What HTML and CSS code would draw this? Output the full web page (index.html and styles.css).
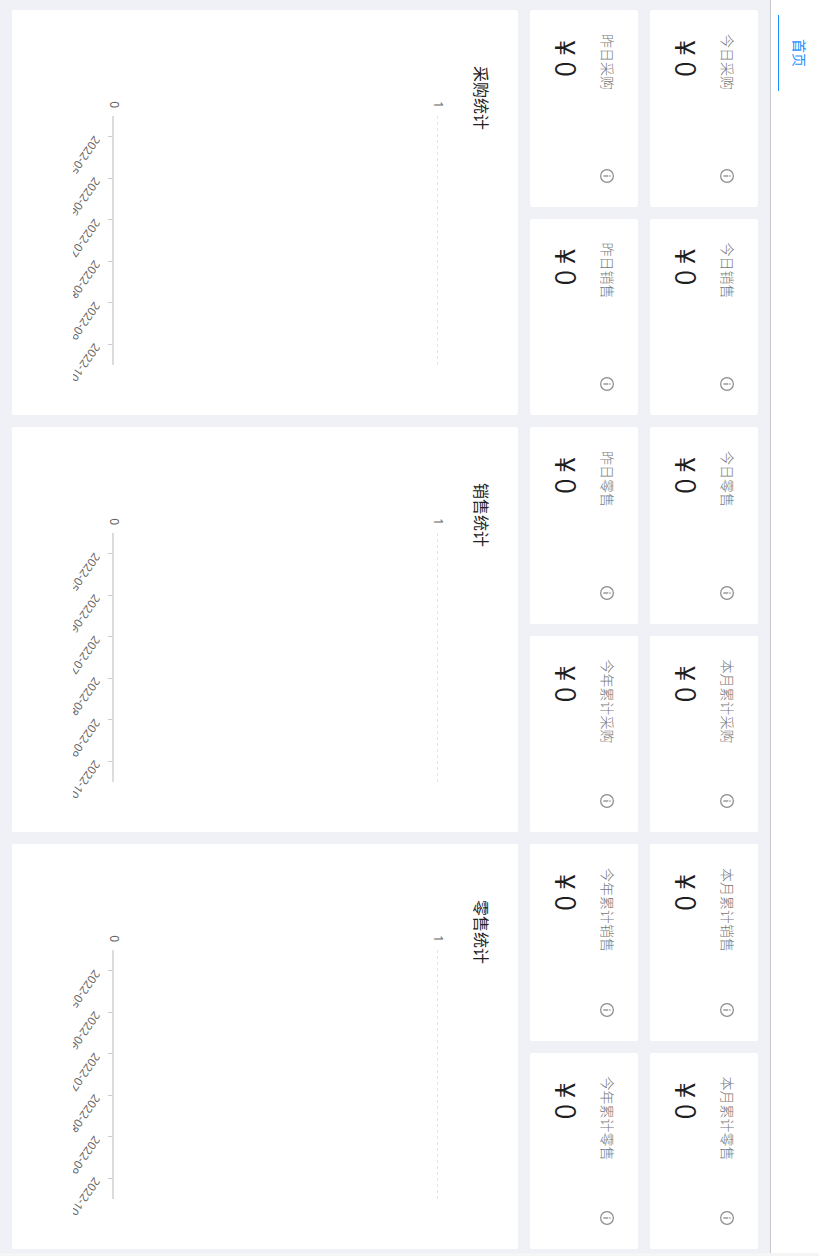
FILE: index.html
```html
<!DOCTYPE html>
<html lang="zh-CN">
<head>
<meta charset="utf-8">
<title>首页</title>
<link rel="stylesheet" href="styles.css">
</head>
<body>
<div class="screen">
<svg class="defs" width="0" height="0">
  <symbol id="info" viewBox="0 0 14 14"><circle cx="7" cy="7" r="6.35" fill="none" stroke="#8c8c8c" stroke-width="1.25"/><path d="M7 3.4v1.3M7 5.7v4.9" stroke="#999" stroke-width="1.5"/></symbol>
  <symbol id="axes" viewBox="0 0 405 445">
    <path d="M106 80.5H355" stroke="#e4e4e4" stroke-dasharray="3 3"/>
    <path d="M106 405H355" stroke="#dcdcdc" stroke-width="2"/>
    <path d="M126.5 406v4M168.5 406v4M209.5 406v4M251.5 406v4M292.5 406v4M334.5 406v4" stroke="#ccc"/>
    <g class="tick" text-anchor="end"><text x="98" y="84.500">1</text><text x="98" y="408.500">0</text></g>
    <g class="tick date">
      <text transform="translate(125 424) rotate(35)">2022-05</text>
      <text transform="translate(166.500 424) rotate(35)">2022-06</text>
      <text transform="translate(208 424) rotate(35)">2022-07</text>
      <text transform="translate(249.500 424) rotate(35)">2022-08</text>
      <text transform="translate(291 424) rotate(35)">2022-09</text>
      <text transform="translate(332.500 424) rotate(35)">2022-10</text>
    </g>
  </symbol>
</svg>
<div class="app">
  <header class="header"><div class="tab">首页</div></header>
  <main class="content">
    <section class="stats">
      <div class="card"><div class="label">今日采购<svg class="icon"><use href="#info"/></svg></div><div class="value"><span class="yen">¥</span>0</div></div>
      <div class="card"><div class="label">今日销售<svg class="icon"><use href="#info"/></svg></div><div class="value"><span class="yen">¥</span>0</div></div>
      <div class="card"><div class="label">今日零售<svg class="icon"><use href="#info"/></svg></div><div class="value"><span class="yen">¥</span>0</div></div>
      <div class="card"><div class="label">本月累计采购<svg class="icon"><use href="#info"/></svg></div><div class="value"><span class="yen">¥</span>0</div></div>
      <div class="card"><div class="label">本月累计销售<svg class="icon"><use href="#info"/></svg></div><div class="value"><span class="yen">¥</span>0</div></div>
      <div class="card"><div class="label">本月累计零售<svg class="icon"><use href="#info"/></svg></div><div class="value"><span class="yen">¥</span>0</div></div>
      <div class="card"><div class="label">昨日采购<svg class="icon"><use href="#info"/></svg></div><div class="value"><span class="yen">¥</span>0</div></div>
      <div class="card"><div class="label">昨日销售<svg class="icon"><use href="#info"/></svg></div><div class="value"><span class="yen">¥</span>0</div></div>
      <div class="card"><div class="label">昨日零售<svg class="icon"><use href="#info"/></svg></div><div class="value"><span class="yen">¥</span>0</div></div>
      <div class="card"><div class="label">今年累计采购<svg class="icon"><use href="#info"/></svg></div><div class="value"><span class="yen">¥</span>0</div></div>
      <div class="card"><div class="label">今年累计销售<svg class="icon"><use href="#info"/></svg></div><div class="value"><span class="yen">¥</span>0</div></div>
      <div class="card"><div class="label">今年累计零售<svg class="icon"><use href="#info"/></svg></div><div class="value"><span class="yen">¥</span>0</div></div>
    </section>
    <section class="charts">
      <div class="panel"><svg class="chart" viewBox="0 0 405 445"><text class="title" x="56" y="43.500">采购统计</text><use href="#axes" width="405" height="445"/></svg></div>
      <div class="panel"><svg class="chart" viewBox="0 0 405 445"><text class="title" x="56" y="43.500">销售统计</text><use href="#axes" width="405" height="445"/></svg></div>
      <div class="panel"><svg class="chart" viewBox="0 0 405 445"><text class="title" x="56" y="43.500">零售统计</text><use href="#axes" width="405" height="445"/></svg></div>
    </section>
  </main>
</div>
</div>
</body>
</html>
```
FILE: styles.css
```css
* { box-sizing: border-box; }
body {
  margin: 0;
  font-family: "Noto Sans", "Noto Sans CJK SC", sans-serif;
}
.screen {
  width: 819px;
  height: 1256px;
  overflow: hidden;
}
.defs { display: block; }
/* Landscape dashboard turned a quarter clockwise for a portrait display */
.app {
  width: 1256px;
  height: 819px;
  transform-origin: 0 0;
  transform: translateX(819px) rotate(90deg);
  background: #eff1f6;
  border-right: 3px solid #f5f5f6;
}
.header {
  height: 49px;
  padding-left: 15px;
  background: #fff;
  border-bottom: 1px solid #c6c7ca;
}
.tab {
  width: 76px;
  height: 41px;
  border-bottom: 1px solid #1890ff;
  color: #1890ff;
  font: 14px/38px "Noto Sans CJK SC", sans-serif;
  text-align: center;
}
.content { padding: 12px 4px 12px 10px; }
.stats {
  display: grid;
  grid-template-columns: repeat(6, 1fr);
  gap: 12px;
}
.card {
  height: 108px;
  padding: 20px 24px;
  background: #fff;
  border-radius: 2px;
}
.label {
  display: flex;
  align-items: flex-start;
  justify-content: space-between;
  height: 22px;
  color: #777;
  font: 300 14px/20px "Noto Sans CJK SC", sans-serif;
}
.icon { width: 14px; height: 14px; margin-top: 4px; }
.value {
  margin-top: 10px;
  padding-left: 6px;
  color: #1f1f1f;
  font: 350 28px/38px "Noto Sans CJK SC", sans-serif;
}
.yen { margin-right: 6px; font-weight: 400; }
.charts {
  display: grid;
  grid-template-columns: repeat(3, 1fr);
  gap: 12px;
  margin-top: 12px;
}
.panel {
  height: 506px;
  background: #fff;
  border-radius: 2px;
}
.chart { display: block; width: 405px; height: 445px; }
.title {
  fill: #222;
  font: 16px "Noto Sans CJK SC", sans-serif;
}
.tick {
  fill: #666;
  font: 12px "Noto Sans", sans-serif;
}
.date { font-size: 11.5px; }
```
